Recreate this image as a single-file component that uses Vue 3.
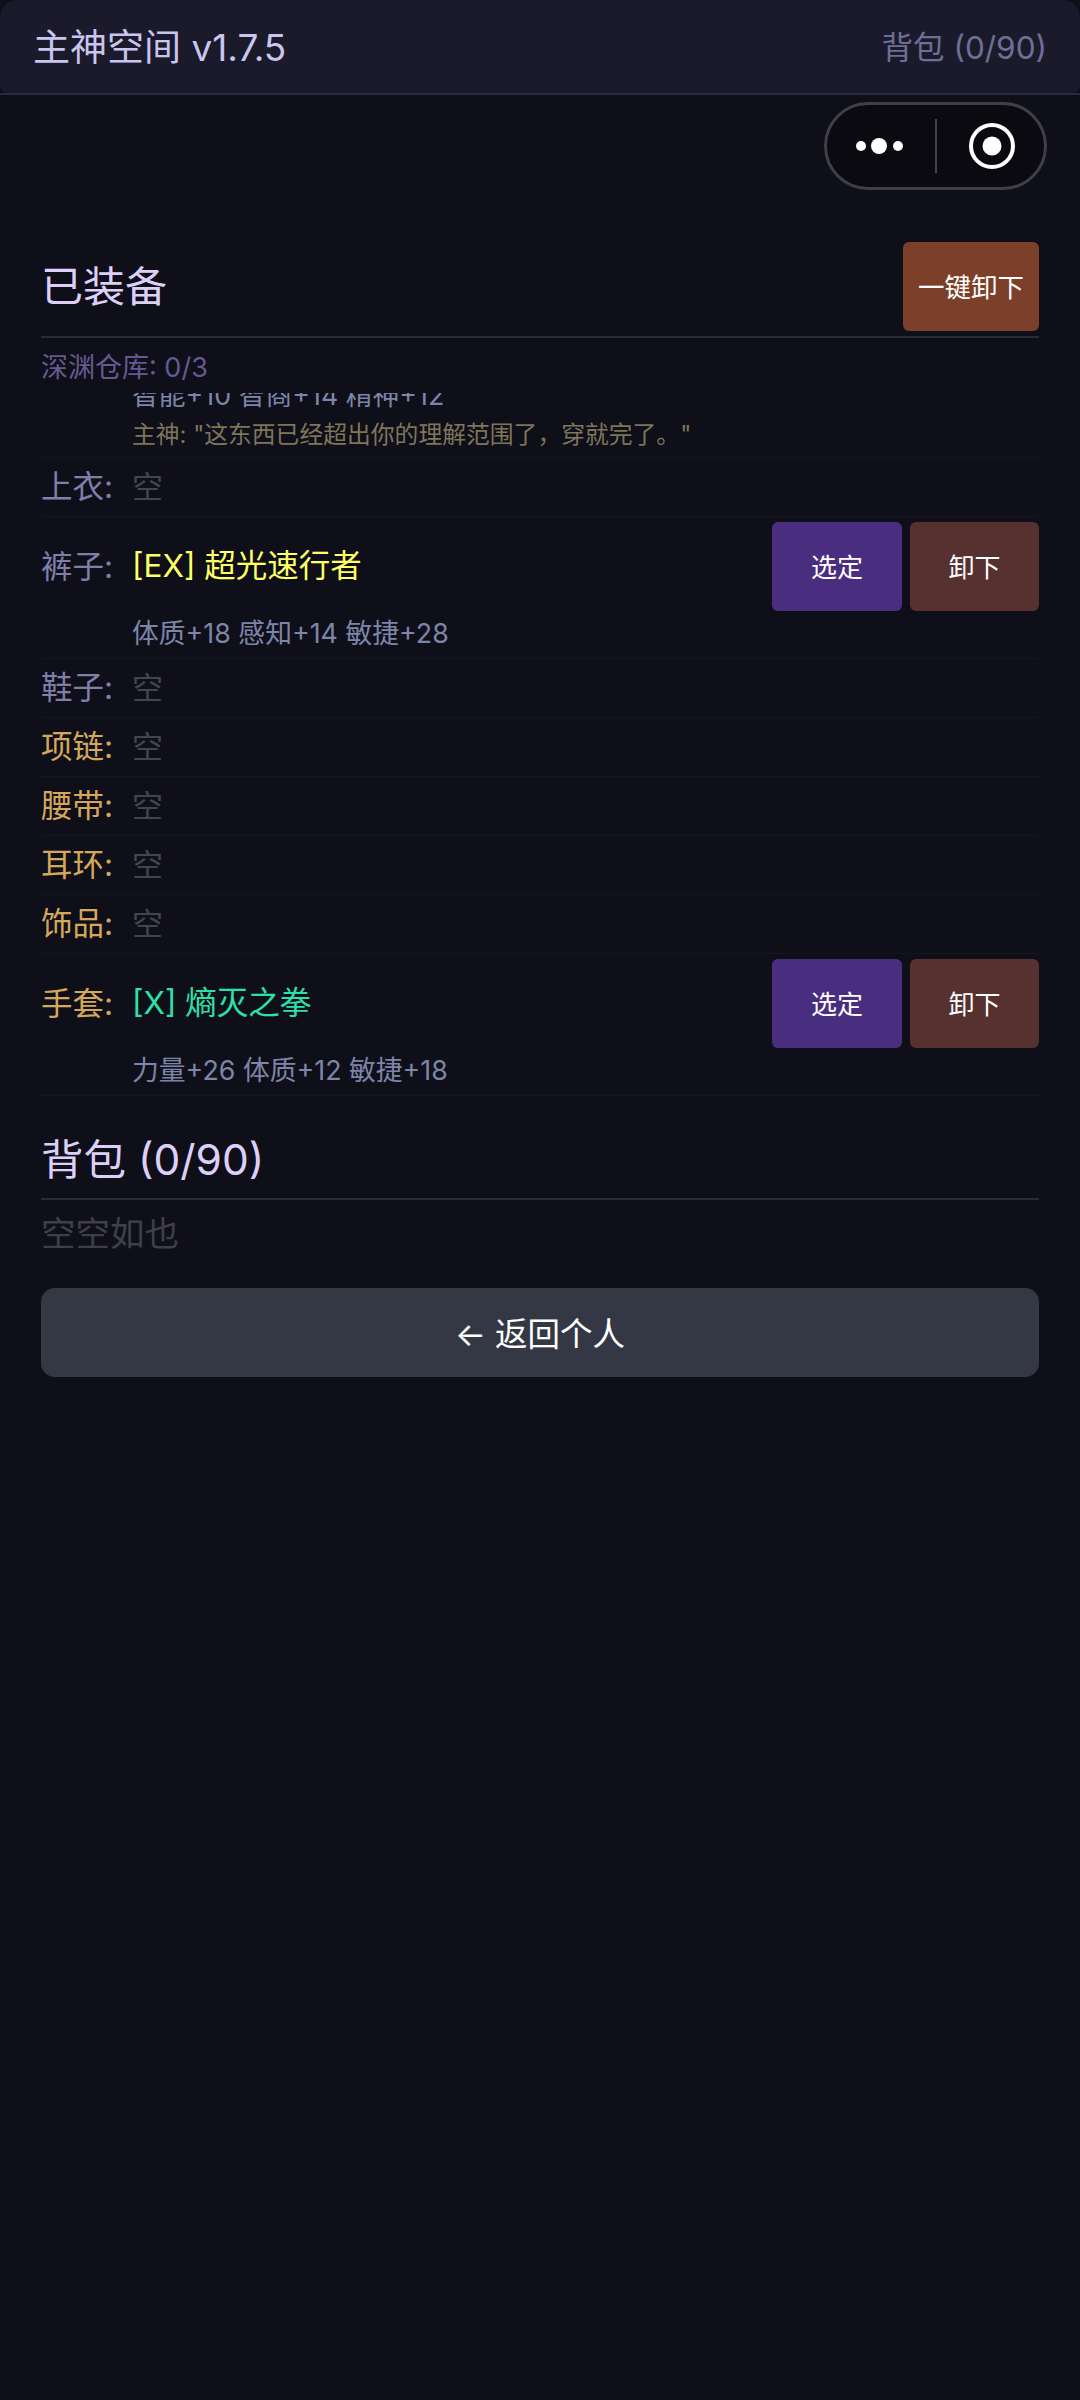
<script setup>
const slots = [
  { key: 'coat', label: '上衣:', empty: true },
  {
    key: 'pants', label: '裤子:', name: '[EX] 超光速行者', nameClass: 'yellow',
    stats: '体质+18 感知+14 敏捷+28',
  },
  { key: 'shoes', label: '鞋子:', empty: true },
  { key: 'necklace', label: '项链:', gold: true, empty: true },
  { key: 'belt', label: '腰带:', gold: true, empty: true },
  { key: 'earring', label: '耳环:', gold: true, empty: true },
  { key: 'trinket', label: '饰品:', gold: true, empty: true },
  {
    key: 'gloves', label: '手套:', gold: true, name: '[X] 熵灭之拳', nameClass: 'teal',
    stats: '力量+26 体质+12 敏捷+18',
  },
]
</script>

<template>
  <div class="page">
    <header class="topbar">
      <div class="topbar-inner">
        <span class="app-title">主神空间 v1.7.5</span>
        <span class="bag-count">背包 (0/90)</span>
      </div>
    </header>

    <div class="capsule">
      <svg class="capsule-icon" width="56" height="24" viewBox="0 0 56 24">
        <circle cx="9" cy="12" r="5" fill="#fff" />
        <circle cx="27" cy="12" r="8" fill="#fff" />
        <circle cx="46" cy="12" r="5" fill="#fff" />
      </svg>
      <span class="capsule-divider"></span>
      <svg class="capsule-icon" width="48" height="48" viewBox="0 0 48 48">
        <circle cx="24" cy="24" r="21" fill="none" stroke="#fff" stroke-width="4" />
        <circle cx="24" cy="24" r="9.5" fill="#fff" />
      </svg>
    </div>

    <main class="content">
      <div class="section-head">
        <h2 class="section-title">已装备</h2>
        <button class="btn btn-orange">一键卸下</button>
      </div>
      <div class="vault">深渊仓库: 0/3</div>

      <div class="scroller">
        <div class="clipped-row">
          <div class="stats">智能+10 智商+14 精神+12</div>
          <div class="quote">主神: "这东西已经超出你的理解范围了，穿就完了。"</div>
        </div>

        <div v-for="slot in slots" :key="slot.key" class="row" :class="{ 'row-item': !slot.empty }">
          <div class="row-main">
            <span class="label" :class="{ gold: slot.gold }">{{ slot.label }}</span>
            <span v-if="slot.empty" class="empty">空</span>
            <template v-else>
              <span class="item-name" :class="slot.nameClass">{{ slot.name }}</span>
              <div class="actions">
                <button class="btn btn-purple">选定</button>
                <button class="btn btn-brown">卸下</button>
              </div>
            </template>
          </div>
          <div v-if="slot.stats" class="stats">{{ slot.stats }}</div>
        </div>
      </div>

      <h2 class="bag-title">背包 (0/90)</h2>
      <div class="bag-empty">空空如也</div>
      <button class="back">← 返回个人</button>
    </main>
  </div>
</template>

<style>
html, body { margin: 0; background: #0f0f1a; }
</style>

<style scoped>
.page {
  position: relative;
  min-height: 2400px;
  background: #0f0f1a;
  font-family: Inter, "Noto Sans CJK SC", sans-serif;
  color: #fff;
}
.topbar { border-bottom: 2px solid #2a2a44; }
.topbar-inner {
  height: 93px;
  box-sizing: border-box;
  padding: 0 33px 4px 33px;
  display: flex;
  align-items: center;
  justify-content: space-between;
  background: #1a1a2b;
  border-radius: 18px 18px 8px 8px;
}
.app-title { font-size: 37px; color: #c9c5f0; }
.bag-count { font-size: 31.5px; color: #6e6e96; }
.capsule {
  position: absolute;
  top: 102px;
  left: 824px;
  width: 223px;
  height: 88px;
  box-sizing: border-box;
  border: 3px solid #3f3f48;
  border-radius: 44px;
  background: #0a0a10;
  display: flex;
  align-items: center;
}
.capsule-icon { position: absolute; top: 50%; transform: translateY(-50%); }
.capsule-icon:first-child { left: 25px; }
.capsule-icon:last-child { left: 141px; }
.capsule-divider {
  position: absolute;
  left: 108px;
  top: 14px;
  width: 2px;
  height: 54px;
  background: #44444c;
}
.content { padding: 147px 41px 0 41px; }
.section-head {
  display: flex;
  align-items: center;
  justify-content: space-between;
  padding-bottom: 5px;
  border-bottom: 2px solid #2a2a3e;
}
.section-title {
  margin: 0 0 6px;
  font-size: 42px;
  font-weight: 400;
  color: #ddd0f8;
}
.btn {
  border: 0;
  border-radius: 6px;
  color: #fff;
  font-family: inherit;
  font-size: 26px;
  font-weight: 400;
  height: 89px;
  padding: 0 0 2px;
}
.btn-orange { width: 136px; background: #7c3f2a; font-size: 26.5px; }
.btn-purple { width: 130px; background: #492e80; }
.btn-brown { width: 129px; background: #573130; }
.vault {
  height: 55px;
  line-height: 60px;
  font-size: 27px;
  color: #655a90;
}
.scroller { overflow: hidden; }
.clipped-row {
  margin-top: -16px;
  padding-bottom: 4px;
  border-bottom: 1px solid #161622;
}
.clipped-row .stats { margin-top: 0; }
.stats {
  padding-left: 91px;
  height: 36px;
  line-height: 36px;
  font-size: 26.8px;
  color: #7d85a8;
}
.quote {
  margin-top: 4px;
  padding-left: 91px;
  height: 36px;
  line-height: 36px;
  font-size: 23.8px;
  color: #7f7559;
}
.row {
  padding: 11px 0;
  border-bottom: 1px solid #161622;
}
.row-item { padding: 5px 0 7px; }
.row-item .stats { margin-top: 4px; }
.row-main {
  display: flex;
  align-items: center;
  line-height: 36px;
}
.label {
  width: 91px;
  flex: none;
  font-size: 31.5px;
  color: #7f7fa8;
}
.label.gold { color: #d4a85a; }
.empty { font-size: 31px; color: #44444f; }
.item-name { font-size: 31.5px; padding-bottom: 2px; }
.yellow { color: #ffff66; }
.teal { color: #2de0a8; }
.actions { margin-left: auto; display: flex; gap: 8px; }
.bag-title {
  margin: 0;
  padding: 36px 0 10px;
  font-size: 42.5px;
  font-weight: 400;
  color: #ddd0f8;
  line-height: 56px;
  border-bottom: 2px solid #2a2a3e;
}
.bag-empty {
  height: 66px;
  line-height: 68px;
  font-size: 34.5px;
  color: #3f3f4b;
}
.back {
  display: block;
  width: 100%;
  height: 89px;
  margin-top: 22px;
  padding: 0 0 3px;
  border: 0;
  border-radius: 14px;
  background: #343844;
  color: #fff;
  font-family: inherit;
  font-size: 32.5px;
  font-weight: 400;
}
</style>
